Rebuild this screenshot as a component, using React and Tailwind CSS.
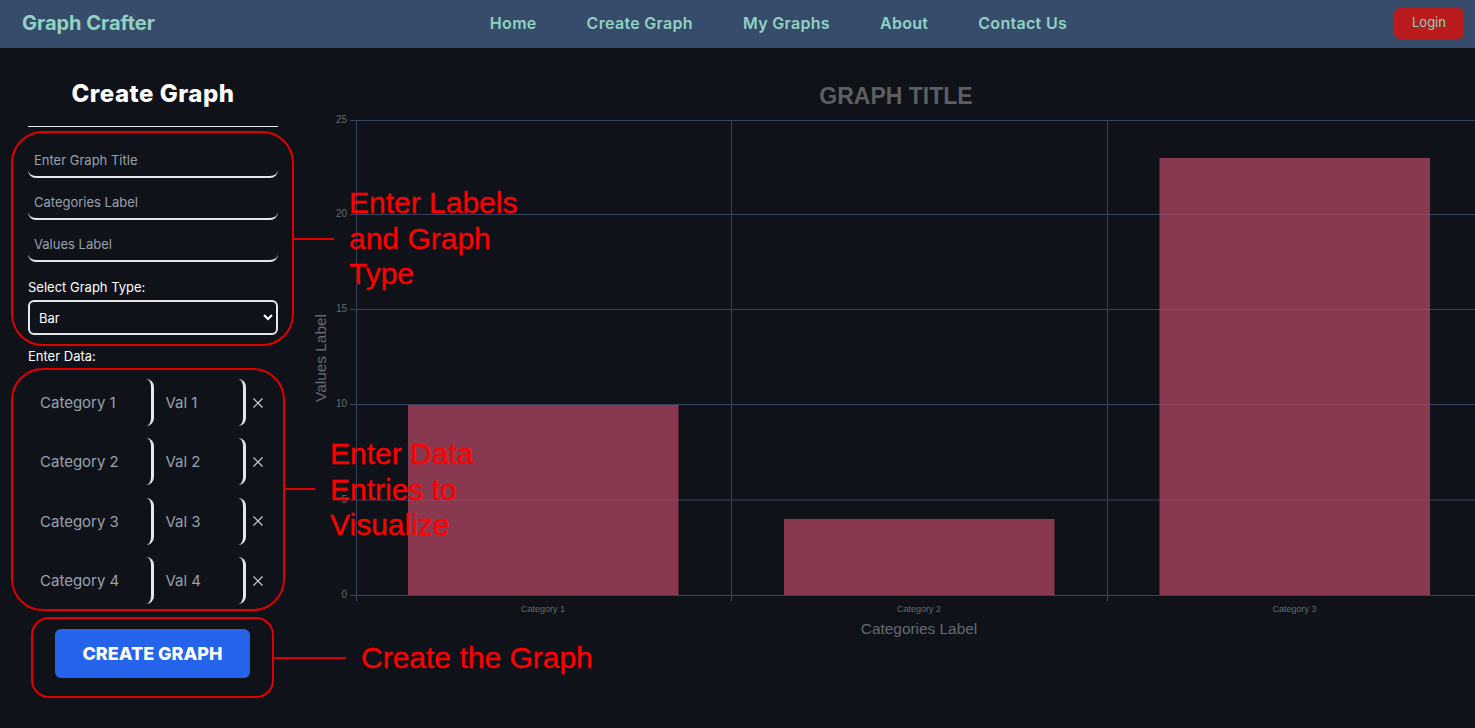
import React from 'react';

const font = { fontFamily: 'Inter, "Noto Sans", sans-serif' };

const navLinks = ['Home', 'Create Graph', 'My Graphs', 'About', 'Contact Us'];
const gridY = [
    { y: 120.5, label: '25' },
    { y: 214.5, label: '20' },
    { y: 309.5, label: '15' },
    { y: 404.5, label: '10' },
    { y: 500, label: '5' },
    { y: 595.5, label: '0' },
];
const bars = [
    { x: 408, top: 405, label: 'Category 1', cx: 543 },
    { x: 784, top: 519, label: 'Category 2', cx: 919 },
    { x: 1159.5, top: 158, label: 'Category 3', cx: 1294.5 },
];

function Navbar() {
    return (
        <nav className="flex items-center justify-between h-12 pb-[2px] bg-[#374c6b] pl-[22px] pr-[11px]">
            <span className="text-[20px] font-bold text-[#8fd3c1]">Graph Crafter</span>
            <ul className="flex items-center gap-[50px] ml-[8px]">
                {navLinks.map((l) => (
                    <li key={l} className="text-[16px] font-semibold text-[#8fd3c1] tracking-[0.3px]">{l}</li>
                ))}
            </ul>
            <button className="w-[70px] h-[31px] rounded-md bg-[#b91c1c] text-[13px] text-[#8fd3c1]">Login</button>
        </nav>
    );
}

function TextField({ placeholder }) {
    return (
        <input
            placeholder={placeholder}
            className="block w-full h-[36px] pt-[2px] px-[6px] bg-transparent rounded-lg border-b-2 border-gray-200 text-[13px] outline-none placeholder:text-gray-400"
        />
    );
}

function DataRow({ n }) {
    return (
        <div className="flex items-center h-[47px]">
            <input
                placeholder={`Category ${n}`}
                className="w-[125.5px] h-full px-3 bg-transparent rounded-lg border-r-[3px] border-gray-200 text-[15px] outline-none placeholder:text-gray-400"
            />
            <input
                placeholder={`Val ${n}`}
                className="w-[92px] h-full px-3 bg-transparent rounded-lg border-r-[3px] border-gray-200 text-[15px] outline-none placeholder:text-gray-400"
            />
            <button className="ml-[6px] w-[12px] text-gray-300">
                <svg width="12" height="12" viewBox="0 0 12 12" fill="none" stroke="currentColor" strokeWidth="1.2"><path d="M1.5 1.5l9 9M10.5 1.5l-9 9" /></svg>
            </button>
        </div>
    );
}

function Sidebar() {
    return (
        <aside className="flex flex-col w-[306px] shrink-0 px-7 text-white">
            <h2 className="mt-[30px] h-[30px] leading-[31px] text-center text-[24px] font-extrabold tracking-[0.5px]">Create Graph</h2>
            <hr className="mt-[18px] border-gray-200" />
            <div className="flex flex-col gap-[6px] mt-[15px]">
                <TextField placeholder="Enter Graph Title" />
                <TextField placeholder="Categories Label" />
                <TextField placeholder="Values Label" />
            </div>
            <div className="flex flex-col gap-[3px] mt-[15px]">
                <label className="text-[13px] leading-5">Select Graph Type:</label>
                <select className="w-full h-[35px] pl-[5px] pr-1 rounded-md border-2 border-gray-200 bg-[#0f1218] text-[13px] [color-scheme:dark]">
                    <option>Bar</option>
                </select>
            </div>
            <p className="mt-[11px] text-[13px] leading-5">Enter Data:</p>
            <div className="flex flex-col gap-[12.4px] mt-[13px]">
                {[1, 2, 3, 4].map((n) => <DataRow key={n} n={n} />)}
            </div>
            <button className="self-start ml-[27px] mt-[25px] w-[195px] h-[49px] rounded-md bg-[#2563eb] text-[18px] font-extrabold text-white">CREATE GRAPH</button>
        </aside>
    );
}

function Chart() {
    const grid = '#33435f';
    const tick = '#666a6f';
    const arial = '"Liberation Sans", Arial, sans-serif';
    return (
        <section className="flex-1 min-w-0 overflow-hidden">
            <svg width="1169" height="680" viewBox="306 48 1169 680" className="block" fontFamily={arial}>
                <text x="896" y="104" textAnchor="middle" fontSize="23" fontWeight="700" fill="#5c5e60">GRAPH TITLE</text>
                {gridY.map((g) => (
                    <g key={g.label}>
                        <line x1="350" x2="1475" y1={g.y} y2={g.y} stroke={grid} />
                        <text x="347" y={g.y + 2.5} textAnchor="end" fontSize="10" fill={tick}>{g.label}</text>
                    </g>
                ))}
                {[356.5, 731.5, 1107.5].map((x) => (
                    <line key={x} x1={x} x2={x} y1="120" y2="601" stroke={grid} />
                ))}
                {bars.map((b) => (
                    <g key={b.label}>
                        <rect x={b.x} y={b.top} width="270.5" height={595 - b.top} fill="#be4a66" fillOpacity="0.7" />
                        <text x={b.cx} y="612" textAnchor="middle" fontSize="9" fill={tick}>{b.label}</text>
                    </g>
                ))}
                <text x="919" y="634" textAnchor="middle" fontSize="15.4" fill={tick}>Categories Label</text>
                <text transform="translate(326 358) rotate(-90)" textAnchor="middle" fontSize="15.4" fill={tick}>Values Label</text>
            </svg>
        </section>
    );
}

function Annotations() {
    const note = 'absolute text-[30px] leading-[35.5px] text-[#ff0000] [-webkit-text-stroke:0.3px_#ff0000]';
    const box = 'absolute border-2 border-[#e00000]';
    const line = 'absolute h-[2px] bg-[#e00000]';
    return (
        <div style={{ fontFamily: '"Liberation Sans", Arial, sans-serif' }}>
            <div className={`${box} left-[11px] top-[131px] w-[283px] h-[215px] rounded-[32px]`} />
            <div className={`${line} left-[294px] top-[238px] w-[40px]`} />
            <div className={`${note} left-[349px] top-[185px]`}>Enter Labels<br />and Graph<br />Type</div>

            <div className={`${box} left-[11px] top-[368px] w-[274px] h-[243px] rounded-[32px]`} />
            <div className={`${line} left-[285px] top-[488px] w-[30px]`} />
            <div className={`${note} left-[330px] top-[436px]`}>Enter Data<br />Entries to<br />Visualize</div>

            <div className={`${box} left-[31px] top-[617px] w-[243px] h-[81px] rounded-[18px]`} />
            <div className={`${line} left-[274px] top-[657px] w-[72px]`} />
            <div className={`${note} left-[361px] top-[640px]`}>Create the Graph</div>
        </div>
    );
}

export default function App() {
    return (
        <div className="relative h-[728px] overflow-hidden bg-[#0f1218]" style={font}>
            <Navbar />
            <div className="flex">
                <Sidebar />
                <Chart />
            </div>
            <Annotations />
        </div>
    );
}
